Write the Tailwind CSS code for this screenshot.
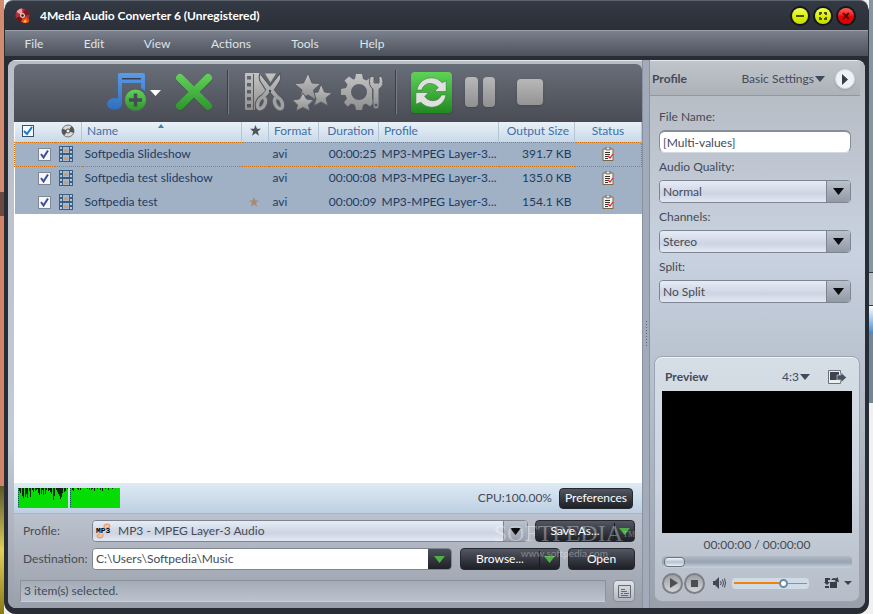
<!DOCTYPE html>
<html lang="en">
<head>
  <meta charset="UTF-8">
  <meta name="viewport" content="width=device-width, initial-scale=1.0">
  <title>4Media Audio Converter 6</title>
  <script src="https://cdn.jsdelivr.net/npm/@tailwindcss/browser@4"></script>
</head>
<body class="relative flex h-screen overflow-hidden bg-[#f0f0f0] font-['Lato','Open_Sans',sans-serif] text-[12px] leading-4 text-[#444b57]">

  <!-- desktop behind the window -->
  <div class="flex w-1 shrink-0 flex-col">
    <div class="h-48 bg-[#d38b70]"></div>
    <div class="h-6 bg-[#6b4a42]"></div>
    <div class="grow bg-[#d08468]"></div>
    <div class="h-32 bg-linear-to-b from-[#5c5a2a] via-[#e2cf5a] to-[#8b7a10]"></div>
  </div>

  <main class="relative flex min-w-0 grow flex-col rounded-xl border-x-4 border-[#272c35] bg-[#272c35] pb-[6px]">

    <header class="-mx-[3px] flex h-[30px] shrink-0 items-center rounded-t-lg border-t border-[#5c626e] bg-linear-to-b from-[#343a44] to-[#2a2f38] pt-px pr-[14px] pl-[10px]">
      <svg class="size-4" viewBox="0 0 16 16">
        <circle cx="7.500" cy="7.500" r="7" fill="#b03034"/>
        <path d="M7.500 7.500 1.500 4A7 7 0 0 1 7 .500z" fill="#f0a0a2"/>
        <path d="M7.500 7.500 14.500 7A7 7 0 0 0 10 1z" fill="#7a1a1e"/>
        <path d="M7.500 7.500 1 10A7 7 0 0 0 6 14.500z" fill="#6b1519"/>
        <circle cx="7.500" cy="7.500" r="2.500" fill="#e2c6c2"/>
        <circle cx="7.500" cy="7.500" r="1.200" fill="#3a1213"/>
        <path d="M6.500 13c0-1.500 2-2 2-3.500 1 .500 1.500 1 1.500 1.500.5-.5 1-1.500.7-3 1.500 1.500 2 2.500 2 3.500L14 11c.8 2.500-.2 4-3.500 4-2.500 0-4-.500-4-2z" fill="#f04a12"/>
        <path d="M8.500 14c0-1.500 1.500-1.500 1.700-2.500 1.500.7 1.800 2 .8 3H9z" fill="#ffcf2e"/>
      </svg>
      <h1 class="ml-[9px] grow truncate font-bold text-white">4Media Audio Converter 6 (Unregistered)</h1>
      <div class="flex gap-[7px]">
        <button aria-label="Minimize" class="size-4 rounded-full bg-linear-to-b from-[#f0ff50] via-[#dcf000] to-[#c4dd00] ring-2 ring-[#14171c]">
          <svg class="size-4" viewBox="0 0 16 16"><path d="M4 7h8v2H4z" fill="#4a5200"/></svg>
        </button>
        <button aria-label="Maximize" class="size-4 rounded-full bg-linear-to-b from-[#f0ff50] via-[#dcf000] to-[#c4dd00] ring-2 ring-[#14171c]">
          <svg class="size-4" viewBox="0 0 16 16"><path d="M5 7V5h2M9 5h2v2M11 9v2H9M7 11H5V9" fill="none" stroke="#4a5200" stroke-width="2"/></svg>
        </button>
        <button aria-label="Close" class="size-4 rounded-full bg-linear-to-b from-[#ff5a5a] via-[#f40000] to-[#d80000] ring-2 ring-[#14171c]">
          <svg class="size-4" viewBox="0 0 16 16"><path d="m5 5 6 6M11 5l-6 6" stroke="#5a0000" stroke-width="2"/></svg>
        </button>
      </div>
    </header>

    <nav class="-mx-[3px] flex h-[26px] shrink-0 items-center border-t border-[#9ba0aa] bg-linear-to-b from-[#7b818d] to-[#4c515b] pl-1 text-[#dfe3ea]">
      <button class="w-[50px] text-center">File</button>
      <button class="w-[70px] text-center">Edit</button>
      <button class="w-[56px] text-center">View</button>
      <button class="w-[92px] text-center">Actions</button>
      <button class="w-[56px] text-center">Tools</button>
      <button class="w-[78px] text-center">Help</button>
    </nav>

    <div class="mt-1 flex min-h-0 grow overflow-hidden rounded-lg bg-[#a8adb6]">

      <!-- file list, output settings -->
      <section class="flex min-w-0 grow flex-col border-t border-[#e4e7ec] bg-linear-to-b from-[#b9bec5] via-[#c3cad8] via-70% to-[#9aa0aa] pt-[3px] pl-[6px]">
        <div class="flex h-[58px] shrink-0 items-center rounded-t-md bg-linear-to-b from-[#686e78] to-[#4a4c55] pb-[2px]">
          <button aria-label="Add file" class="ml-[92px] h-10 w-[56px]">
            <svg class="h-10 w-[56px]" viewBox="0 0 56 40">
              <defs>
                <linearGradient id="blue" x1="0" y1="0" x2="0" y2="1"><stop stop-color="#5a9be8"/><stop offset="1" stop-color="#2f6fc0"/></linearGradient>
                <linearGradient id="green" x1="0" y1="0" x2="0" y2="1"><stop stop-color="#62d159"/><stop offset="1" stop-color="#2b962b"/></linearGradient>
                <linearGradient id="green-cross" gradientUnits="userSpaceOnUse" x1="0" y1="2" x2="0" y2="38"><stop stop-color="#62d159"/><stop offset="1" stop-color="#2b962b"/></linearGradient>
                <linearGradient id="gray" x1="0" y1="0" x2="0" y2="1"><stop stop-color="#c4c4c4"/><stop offset="1" stop-color="#8e8e8e"/></linearGradient>
                <linearGradient id="gray-icon" gradientUnits="userSpaceOnUse" x1="0" y1="2" x2="0" y2="40"><stop stop-color="#c4c4c4"/><stop offset="1" stop-color="#8e8e8e"/></linearGradient>
              </defs>
              <path d="M12 3q0-2 2-2h23q2 0 2 2v16l-4-3v-5H16v21c0 3-3 5.500-7.500 5.500S1 35 1 32s3.500-6 7.500-6q2 0 3.500.700z" fill="url(#blue)"/>
              <path d="M16 6.700h19" stroke="#3a404c" stroke-width="1.500"/>
              <circle cx="29.500" cy="28" r="11.500" fill="#565b65"/>
              <circle cx="29.500" cy="28" r="10.500" fill="url(#green)"/>
              <path d="M29.500 21.500v13M23 28h13" stroke="#464b55" stroke-width="3.500"/>
              <path d="M44 18h11l-5.500 6z" fill="#fff"/>
            </svg>
          </button>
          <button aria-label="Remove" class="ml-3 size-10">
            <svg class="size-10" viewBox="0 0 40 40"><path d="m6 6 28 28M34 6 6 34" transform="translate(0 1)" stroke="#38402f" stroke-opacity=".4" stroke-width="8" stroke-linecap="round"/><path d="m6 6 28 28M34 6 6 34" stroke="url(#green-cross)" stroke-width="8" stroke-linecap="round"/></svg>
          </button>
          <div class="mr-[15px] ml-[13px] h-[44px] w-[2px] border-l border-[#3c3f47] bg-[#767b84]"></div>
          <button aria-label="Clip" class="size-[42px]">
            <svg class="size-[42px]" viewBox="0 0 42 42" fill="url(#gray-icon)">
              <path fill-rule="evenodd" d="M2 2h15l8 18-8 6-6 8v5H2q-1 0-1-1V3q0-1 1-1zm1 3v3.500h4V5zm0 7v3.500h4V12zm0 7v3.500h4V19zm0 7v3.500h4V26zm0 7v3.500h4V33z"/>
              <path d="M9.500 3v36" stroke="#555962"/>
              <path d="M21 2.500h11l-5.500 9z"/>
              <path d="M16 2.500q-2 5 1 9l5 8-8 9h6l6-7 6 7h6l-8-9 5-8q3-4 1-9L26 15z" stroke="#555962" stroke-width="1.200"/>
              <g fill="none" stroke="#555962" stroke-width="5.500"><ellipse cx="17.500" cy="32" rx="3.500" ry="6" transform="rotate(25 17.500 32)"/><ellipse cx="34.500" cy="32" rx="3.500" ry="6" transform="rotate(-25 34.500 32)"/></g>
              <path d="m23 18-6 7.500 3 2 6-7 6 7 3-2-6-7.500z"/>
              <g fill="none" stroke="#a0a0a0" stroke-width="3.500"><ellipse cx="17.500" cy="32" rx="3.500" ry="6" transform="rotate(25 17.500 32)"/><ellipse cx="34.500" cy="32" rx="3.500" ry="6" transform="rotate(-25 34.500 32)"/></g>
              <circle cx="26" cy="20" r="1.200" fill="#444851"/>
            </svg>
          </button>
          <button aria-label="Effects" class="ml-[7px] h-[42px] w-10">
            <svg class="h-[42px] w-10" viewBox="0 0 40 42" fill="url(#gray)" stroke="#585c65" stroke-width="1">
              <path d="m28 13 3.500 8 7.500 1-6 5 2 8-7-4-7 4 2-8-5-5 7-1z"/>
              <path d="m15 2 4 10 9 .500-7.500 6.500L23 29l-8-5-9 5 3-10-8-6.500 9.500-.500z"/>
              <path d="m10 22 3.500 6 7 1-5 5 1.500 6-7-3.500L3 40l1.500-6-5-5 7-1z"/>
            </svg>
          </button>
          <button aria-label="Settings" class="ml-2 h-[42px] w-[44px]">
            <svg class="h-[42px] w-[44px]" viewBox="0 0 44 42">
              <g fill="url(#gray)">
                <path fill-rule="evenodd" d="M14 2h6l1 5 3.500 1.500 4-3L33 10l-3 4.500v12l2 3.500-4 4.500-4-3-3 1.500-1 5h-6l-1-5-3.500-1.500-4 3L2 30.500l3-4L3.500 23H-1v-6l5-1 1.500-3.500-3-4L7 4.500l4 3L13 7zm3 10a8 8 0 1 0 0 16 8 8 0 0 0 0-16z" transform="translate(1 1)"/>
                <path d="M29 6q-2 9 3 12v17q0 3 3 3t3-3V18q6-3 3-12l-3-1v7h-5V5z" stroke="#585c65"/>
              </g>
              <circle cx="35" cy="34" r="1.500" fill="#555962"/>
            </svg>
          </button>
          <div class="mr-[14px] ml-[10px] h-[44px] w-[2px] border-l border-[#3c3f47] bg-[#767b84]"></div>
          <button aria-label="Convert" class="size-[41px] rounded-sm bg-linear-to-b from-[#5fd257] to-[#208a22] shadow-sm">
            <svg class="size-[41px]" viewBox="0 0 42 42" fill="#e0e0e0" stroke="#2a7d2a" stroke-width=".6">
              <path d="M6 18.500C8 10 14 6 21 6c5 0 8 2 11 5l4-2v11H24l4-4c-6-7-15-5-17 2.500z"/>
              <path d="M36 23.500C34 32 28 36 21 36c-5 0-8-2-11-5l-5 2V21h13l-4 4c5 7 15 5 17-1.500z"/>
            </svg>
          </button>
          <button aria-label="Pause" class="ml-[13px] flex h-[30px] w-[30px] gap-[5px]">
            <span class="h-[30px] grow rounded-sm bg-linear-to-b from-[#b8b8b8] to-[#909090] shadow-sm"></span>
            <span class="h-[30px] grow rounded-sm bg-linear-to-b from-[#b8b8b8] to-[#909090] shadow-sm"></span>
          </button>
          <button aria-label="Stop" class="ml-[22px] size-[26px] rounded-sm bg-linear-to-b from-[#b8b8b8] to-[#949494] shadow-sm"></button>
        </div>

        <div class="min-h-0 grow overflow-hidden bg-white">
          <table class="w-full table-fixed border-collapse text-left whitespace-nowrap text-[#1f3a5f]">
            <colgroup>
              <col class="w-[40px]"><col class="w-[27px]"><col class="w-[160px]"><col class="w-[27px]"><col class="w-[50px]"><col class="w-[60px]"><col class="w-[120px]"><col class="w-[76px]"><col>
            </colgroup>
            <thead class="bg-linear-to-b from-[#e9f1f8] to-[#c9d9e7] text-[#3f6fa8]">
              <tr class="h-5 *:border-r *:border-[#b3c6d8] *:p-0 *:pb-[2px] *:font-normal">
                <th class="border-r-0!">
                  <label class="ml-[7px] flex size-3 items-center justify-center border border-[#3d5068] bg-[#f4f8fc]">
                    <input type="checkbox" checked aria-label="Select all" class="peer absolute size-3 appearance-none">
                    <svg class="pointer-events-none hidden size-[10px] peer-checked:block" viewBox="0 0 10 10"><path d="m1 5 3 3 5-7" fill="none" stroke="#1677c8" stroke-width="2"/></svg>
                  </label>
                </th>
                <th>
                  <svg class="ml-[6px] size-[14px]" viewBox="0 0 14 14"><circle cx="7" cy="7" r="6" fill="#d8d8d8" stroke="#777"/><path d="M7 7 1.500 4.500A6 6 0 0 0 3 11.500zM7 7l5.500 2A6 6 0 0 0 10.500 2z" fill="#555"/><circle cx="7" cy="7" r="2" fill="#eee" stroke="#555"/></svg>
                </th>
                <th class="relative pl-[5px]!">Name<svg class="absolute top-[2px] left-[76px] h-1 w-[6px]" viewBox="0 0 6 4"><path d="m3 0 3 4H0z" fill="#3f82ae"/></svg></th>
                <th><svg class="mx-auto size-[11px]" viewBox="0 0 12 12"><path d="m6 0 1.600 4.200H12L8.500 7l1.300 4.600L6 8.900l-3.800 2.700L3.500 7 0 4.200h4.400z" fill="#4d5560"/></svg></th>
                <th class="pl-[5px]!">Format</th>
                <th class="pr-1! text-right">Duration</th>
                <th class="pl-[5px]!">Profile</th>
                <th class="pr-[5px]! text-right">Output Size</th>
                <th class="text-center">Status</th>
              </tr>
            </thead>
            <tbody id="files" class="bg-[#a0b1c6]"></tbody>
          </table>
        </div>

        <div class="flex h-[31px] shrink-0 items-center border-b border-[#9db8d6] bg-linear-to-b from-[#dfebf4] to-[#bccfe2] pr-[9px] pl-1">
          <svg class="h-[20px] w-[102px]" viewBox="0 0 102 20">
            <path d="M0 0h50v20H0zM52 0h50v20H52z" fill="#04dc04"/>
            <path d="M.500 0v20M52.500 0v20" stroke="#063" stroke-dasharray="1 1"/>
            <path id="cpu-load" stroke="#0b260b"/>
          </svg>
          <span class="mr-[7px] ml-auto">CPU:100.00%</span>
          <button class="h-[21px] w-[74px] rounded border border-[#25282f] bg-linear-to-b from-[#535763] to-[#1e2026] text-white">Preferences</button>
        </div>

        <div class="flex h-[94px] shrink-0 flex-col bg-linear-to-b from-[#bcc2cd] to-[#9aa0aa] pt-[5px] pr-[7px] pl-[6px]">
          <div class="flex h-6 items-center pl-[3px]">
            <label for="profile" class="w-[69px] shrink-0">Profile:</label>
            <div class="relative flex h-[22px] grow overflow-hidden rounded border border-[#7e8591]">
              <select id="profile" class="w-full appearance-none bg-linear-to-b from-[#e6ecf7] via-[#cdd4e2] via-60% to-[#e2e8f3] pl-[25px]"><option>MP3 - MPEG Layer-3 Audio</option></select>
              <svg class="pointer-events-none absolute top-[2px] left-[3px] size-4" viewBox="0 0 16 16"><path d="M8 5V3q0-2 3-2t3 2-3 2M7 11v2q0 2-3 2t-3-2 3-2" fill="#f7c09a" stroke="#e2955f"/><text x="0" y="10" class="fill-black font-['Liberation_Mono',monospace] text-[8px] font-bold">MP3</text></svg>
              <span class="pointer-events-none absolute inset-y-0 right-0 flex w-6 items-center justify-center border-l border-[#7e8591] bg-linear-to-b from-[#b9c1cd] to-[#99a0ac]"><svg class="h-[7px] w-[11px]" viewBox="0 0 11 7"><path d="M0 0h11L5.500 7z" fill="#0b0d10"/></svg></span>
            </div>
            <button class="ml-[7px] flex h-[22px] w-[100px] items-center rounded border border-[#25282f] bg-linear-to-b from-[#535763] to-[#1e2026] text-white">
              <span class="grow border-r border-[#16181c]">Save As...</span>
              <svg class="mx-1 h-[7px] w-[11px]" viewBox="0 0 11 7"><path d="M0 0h11L5.500 7z" fill="#4fae45"/></svg>
            </button>
          </div>
          <div class="mt-1 flex h-6 items-center pl-[3px]">
            <label for="destination" class="w-[69px] shrink-0">Destination:</label>
            <div class="flex h-[22px] min-w-0 grow overflow-hidden rounded border border-[#7e8591]">
              <input id="destination" value="C:\Users\Softpedia\Music" class="min-w-0 grow bg-white px-[3px]">
              <button aria-label="Recent folders" class="flex w-[23px] items-center justify-center bg-linear-to-b from-[#4c505c] to-[#1e2026]"><svg class="h-[7px] w-[11px]" viewBox="0 0 11 7"><path d="M0 0h11L5.500 7z" fill="#4fae45"/></svg></button>
            </div>
            <button class="ml-2 flex h-[22px] w-[100px] items-center rounded border border-[#25282f] bg-linear-to-b from-[#535763] to-[#1e2026] text-white">
              <span class="grow border-r border-[#16181c]">Browse...</span>
              <svg class="mx-1 h-[7px] w-[11px]" viewBox="0 0 11 7"><path d="M0 0h11L5.500 7z" fill="#4fae45"/></svg>
            </button>
            <button class="ml-2 h-[22px] w-[67px] rounded border border-[#25282f] bg-linear-to-b from-[#535763] to-[#1e2026] text-white">Open</button>
          </div>
          <div class="mt-[9px] flex items-center gap-[7px]">
            <p class="h-[22px] grow border border-[#8b929d] border-b-[#c9ced8] bg-linear-to-b from-[#a3abb7] to-[#bcc3cf] pt-[2px] pl-[3px]">3 item(s) selected.</p>
            <button aria-label="Show log" class="flex size-[22px] items-center justify-center rounded-sm border border-[#868d98] bg-linear-to-b from-[#dfe2e7] to-[#b3b8c1]">
              <svg class="size-[13px]" viewBox="0 0 13 13"><path d="M.500.500h12v12H.500zM3 4.500h4M3 6.500h6M3 8.500h2M6 8.500h5M3 10.500h7" fill="none" stroke="#666b73"/></svg>
            </button>
          </div>
        </div>
      </section>

      <div class="flex w-2 shrink-0 items-center justify-center border-x border-[#8791a2] bg-[#a2abb9]">
        <svg class="h-[26px] w-[3px]" viewBox="0 0 3 26"><path d="M1.500 0v26" stroke="#5d6675" stroke-dasharray="1 2"/></svg>
      </div>

      <!-- profile settings and preview -->
      <aside class="flex w-[215px] shrink-0 flex-col rounded-tr-lg border-t border-[#e4e7ec] bg-linear-to-b from-[#b4b9c0] via-[#c8d2e0] via-35% to-[#9aa0aa]">
        <div class="mr-[5px] flex h-[35px] items-center border-b border-[#8e97a8] bg-linear-to-b from-[#c0c4cb] to-[#adb2b9] pt-[2px] pr-[5px] pl-[2px]">
          <h2 class="grow font-bold">Profile</h2>
          <button class="flex items-center gap-px">Basic Settings<svg class="h-[6px] w-[10px]" viewBox="0 0 10 6"><path d="M0 0h10L5 6z" fill="#3f4a5a"/></svg></button>
          <button aria-label="Expand" class="ml-[10px] flex size-5 items-center justify-center rounded-full border border-[#d5dae2] bg-[#edf2f8] shadow"><svg class="h-[11px] w-[6px]" viewBox="0 0 6 11"><path d="m0 0 6 5.500L0 11z" fill="#343d4b"/></svg></button>
        </div>

        <form class="flex grow flex-col pt-[13px] pr-[14px] pl-[9px]">
          <label for="file-name">File Name:</label>
          <input id="file-name" value="[Multi-values]" class="mt-[5px] mb-[6px] h-[23px] rounded-md border border-t-2 border-[#878d97] border-b-[#d4dae3] bg-white px-[3px]">
          <label for="quality">Audio Quality:</label>
          <div class="relative mt-[5px] mb-[6px] flex h-[23px] overflow-hidden rounded border border-[#7e8591]">
            <select id="quality" class="w-full appearance-none bg-linear-to-b from-[#e6ecf7] via-[#cdd4e2] via-60% to-[#e2e8f3] pl-[3px]"><option>Normal</option></select>
            <span class="pointer-events-none absolute inset-y-0 right-0 flex w-6 items-center justify-center border-l border-[#7e8591] bg-linear-to-b from-[#b9c1cd] to-[#929aa6]"><svg class="h-[7px] w-[11px]" viewBox="0 0 11 7"><path d="M0 0h11L5.500 7z" fill="#0b0d10"/></svg></span>
          </div>
          <label for="channels">Channels:</label>
          <div class="relative mt-[5px] mb-[6px] flex h-[23px] overflow-hidden rounded border border-[#7e8591]">
            <select id="channels" class="w-full appearance-none bg-linear-to-b from-[#e6ecf7] via-[#cdd4e2] via-60% to-[#e2e8f3] pl-[3px]"><option>Stereo</option></select>
            <span class="pointer-events-none absolute inset-y-0 right-0 flex w-6 items-center justify-center border-l border-[#7e8591] bg-linear-to-b from-[#b9c1cd] to-[#929aa6]"><svg class="h-[7px] w-[11px]" viewBox="0 0 11 7"><path d="M0 0h11L5.500 7z" fill="#0b0d10"/></svg></span>
          </div>
          <label for="split">Split:</label>
          <div class="relative mt-[5px] flex h-[23px] overflow-hidden rounded border border-[#7e8591]">
            <select id="split" class="w-full appearance-none bg-linear-to-b from-[#e6ecf7] via-[#cdd4e2] via-60% to-[#e2e8f3] pl-[3px]"><option>No Split</option></select>
            <span class="pointer-events-none absolute inset-y-0 right-0 flex w-6 items-center justify-center border-l border-[#7e8591] bg-linear-to-b from-[#b9c1cd] to-[#929aa6]"><svg class="h-[7px] w-[11px]" viewBox="0 0 11 7"><path d="M0 0h11L5.500 7z" fill="#0b0d10"/></svg></span>
          </div>
        </form>

        <div class="mr-[5px] mb-[6px] ml-1 flex flex-col rounded-lg border border-[#9ba6b5] bg-linear-to-b from-[#d5dde5] via-[#ccd5df] via-50% to-[#b6bdc8] px-[7px] pb-[7px] shadow-[inset_0_1px_0_#eef2f6]">
          <div class="flex h-[34px] items-center pt-[10px] pr-[5px] pb-1 pl-[3px]">
            <h2 class="grow font-bold">Preview</h2>
            <button class="flex items-center gap-px">4:3<svg class="h-[6px] w-[10px]" viewBox="0 0 10 6"><path d="M0 0h10L5 6z" fill="#3f4a5a"/></svg></button>
            <button aria-label="Snapshot" class="ml-[18px]">
              <svg class="h-4 w-[19px]" viewBox="0 0 19 16"><path d="M.500 1.500h12v13H.500z" fill="#eceff2" stroke="#6b727d"/><path d="M2 3h9v8H2z" fill="#3e444d"/><path d="M9 6h4V3.500l5.500 5-5.500 5V11H9z" fill="#4b525d" stroke="#dde3ea" stroke-width=".6"/></svg>
            </button>
          </div>
          <div class="h-[142px] bg-black"></div>
          <p class="mt-1 text-center">00:00:00 / 00:00:00</p>
          <div class="relative mt-[3px] flex h-3 items-center rounded-sm bg-linear-to-b from-[#b1bac6] via-[#98a3b1] to-[#c5d3df]">
            <input type="range" value="0" aria-label="Position" class="absolute inset-0 h-3 w-full opacity-0">
            <span class="ml-[2px] h-[10px] w-[21px] rounded-sm border border-[#68737f] bg-linear-to-b from-[#f2f5f8] via-[#b6c2d0] to-[#e8eef4]"></span>
          </div>
          <div class="mt-1 flex h-[22px] items-center">
            <button aria-label="Play" class="flex size-[21px] items-center justify-center rounded-full border-2 border-[#7d8186] bg-linear-to-b from-[#9da0a4] to-[#d4d6d8]"><svg class="ml-[2px] h-[10px] w-2" viewBox="0 0 8 10"><path d="m0 0 8 5-8 5z" fill="#4b4e52"/></svg></button>
            <button aria-label="Stop preview" class="ml-px flex size-[21px] items-center justify-center rounded-full border-2 border-[#7d8186] bg-linear-to-b from-[#9da0a4] to-[#d4d6d8]"><span class="size-[7px] bg-[#4b4e52]"></span></button>
            <button aria-label="Mute" class="ml-2"><svg class="h-3 w-[13px]" viewBox="0 0 13 12"><path d="M0 4h2l4-4v12L2 8H0z" fill="#414855"/><path d="M7.500 4q1.500 2 0 4M9.500 2.500q2 3.500 0 7M11.500 1.500q2 4.500 0 9" fill="none" stroke="#414855"/></svg></button>
            <div class="relative ml-[6px] flex h-[11px] w-[77px] items-center rounded bg-[#cfdce8] px-[2px]">
              <input type="range" value="68" aria-label="Volume" class="absolute inset-0 h-[11px] w-full opacity-0">
              <span class="h-[2px] w-[45px] bg-[#f08208]"></span><span class="size-[9px] rounded-full border-2 border-[#6d87a5] bg-white"></span><span class="h-px grow bg-[#7895b2]"></span>
            </div>
            <button aria-label="Rotate" class="ml-[15px]"><svg class="h-3 w-[15px]" viewBox="0 0 15 12" fill="#383d45"><path d="M6 5h7v6H6z"/><path d="M1 1h5v2H4v2h2L3 8 0 5h1z"/><path d="M7 3q2-3 5-1.500L13.500 0 15 5l-4.500-.500L11.500 3z"/><path d="M1 9h4v2H1z"/></svg></button>
            <button aria-label="Snapshot options" class="ml-[5px]"><svg class="h-1 w-2" viewBox="0 0 8 4"><path d="M0 0h8L4 4z" fill="#3f444c"/></svg></button>
          </div>
        </div>
      </aside>
    </div>

    <!-- watermark -->
    <div class="pointer-events-none absolute right-[230px] bottom-[53px] text-white/35">
      <p class="font-['Liberation_Serif',serif] text-[24px] leading-6">SOFTPEDIA<sup class="text-[8px]">TM</sup></p>
      <p class="text-center text-[10px] leading-4">www.softpedia.com</p>
    </div>
  </main>

  <div class="flex w-1 shrink-0 flex-col">
    <div class="h-[272px] bg-[#8297a3]"></div>
    <div class="h-[34px] border-y border-[#333a42] bg-[#b4c0ca]"></div>
    <div class="h-7 bg-linear-to-b from-white to-[#2a8be0]"></div>
    <div class="h-[69px] bg-[#70879a]"></div>
    <div class="grow bg-[#f0f0f0]"></div>
  </div>

  <script>
    const files = [
      { name: 'Softpedia Slideshow', star: false, duration: '00:00:25', size: '391.7 KB' },
      { name: 'Softpedia test slideshow', star: false, duration: '00:00:08', size: '135.0 KB' },
      { name: 'Softpedia test', star: true, duration: '00:00:09', size: '154.1 KB' },
    ];

    const star = '<svg class="ml-[7px] size-[10px]" viewBox="0 0 12 12"><path d="m6 0 1.600 4.200H12L8.500 7l1.300 4.600L6 8.900l-3.800 2.700L3.500 7 0 4.200h4.400z" fill="#a88a6c"/></svg>';

    document.getElementById('files').innerHTML = files.map((file, i) => `
      <tr class="h-6 *:p-0 ${i === 0 ? 'border border-dotted border-[#d0730f]' : ''}">
        <td>
          <label class="ml-[23px] flex size-[13px] items-center justify-center border border-[#7d8894] bg-[#f7f7fb]">
            <input type="checkbox" checked aria-label="${file.name}" class="peer absolute size-3 appearance-none">
            <svg class="pointer-events-none hidden size-[9px] peer-checked:block" viewBox="0 0 9 9"><path d="m1 4 2.500 3.500L8 .500" fill="none" stroke="#3c4da0" stroke-width="2"/></svg>
          </label>
        </td>
        <td>
          <svg class="ml-[3px] size-4" viewBox="0 0 16 16"><path d="M1 0h14v16H1z" fill="#3a5f83"/><path d="M5 1h6v6H5zM5 9h6v6H5z" fill="#a9b8c8"/><path d="M6 3h4v3H6zM6 11h4v3H6z" fill="#c39f7b"/><path d="M3 1v15M13 1v15" stroke="#b4c6d8" stroke-width="2" stroke-dasharray="2 2"/></svg>
        </td>
        <td class="pl-[3px]!">${file.name}</td>
        <td>${file.star ? star : ''}</td>
        <td class="pl-1!">avi</td>
        <td class="pr-[2px]! text-right">${file.duration}</td>
        <td class="pl-[3px]!">MP3-MPEG Layer-3...</td>
        <td class="pr-[3px]! text-right">${file.size}</td>
        <td>
          <svg class="mx-auto h-[14px] w-3" viewBox="0 0 12 14"><path d="M1 2h10v11.500H1z" fill="#f6f3ea" stroke="#7a6a4c"/><path d="M4 0h4v3H4z" fill="#ddd" stroke="#555" stroke-width=".7"/><path d="M3 5.500h5M3 7.500h5M3 9.500h4M3 11.500h3" stroke="#333"/><path d="m6 9 2 2 3-4" fill="none" stroke="#d8202c" stroke-width="1.200"/></svg>
        </td>
      </tr>`).join('');

    // load drops from 100%, one value per sample
    const load = [0, 3, 5, 0, 8, 10, 0, 9, 6, 10, 0, 3, 9, 0, 2, 4, 0, 3, 2, 1, 5, 7, 0, 6, 2, 7, 0, 6, 2, 0, 3, 2, 4, 6, 0, 12, 8, 0, 2, 4, 6, 8, 11, 9, 5, 0, 4, 3, 0, 1];
    const dips = [0, 0, 2, 3, 0, 0, 0, 1, 2, 0, 2, 0, 0, 0, 0, 0, 0, 1, 0, 2, 0, 2, 1, 0, 3, 0, 0, 1, 0, 0, 2, 0, 3, 0, 0, 1, 0, 0, 2, 0, 0, 0, 1];
    document.getElementById('cpu-load').setAttribute('d',
      load.map((v, i) => `M${i + 0.5} 0v${v}`).join('') + dips.map((v, i) => `M${i + 52.5} 0v${v}`).join(''));
  </script>
</body>
</html>
